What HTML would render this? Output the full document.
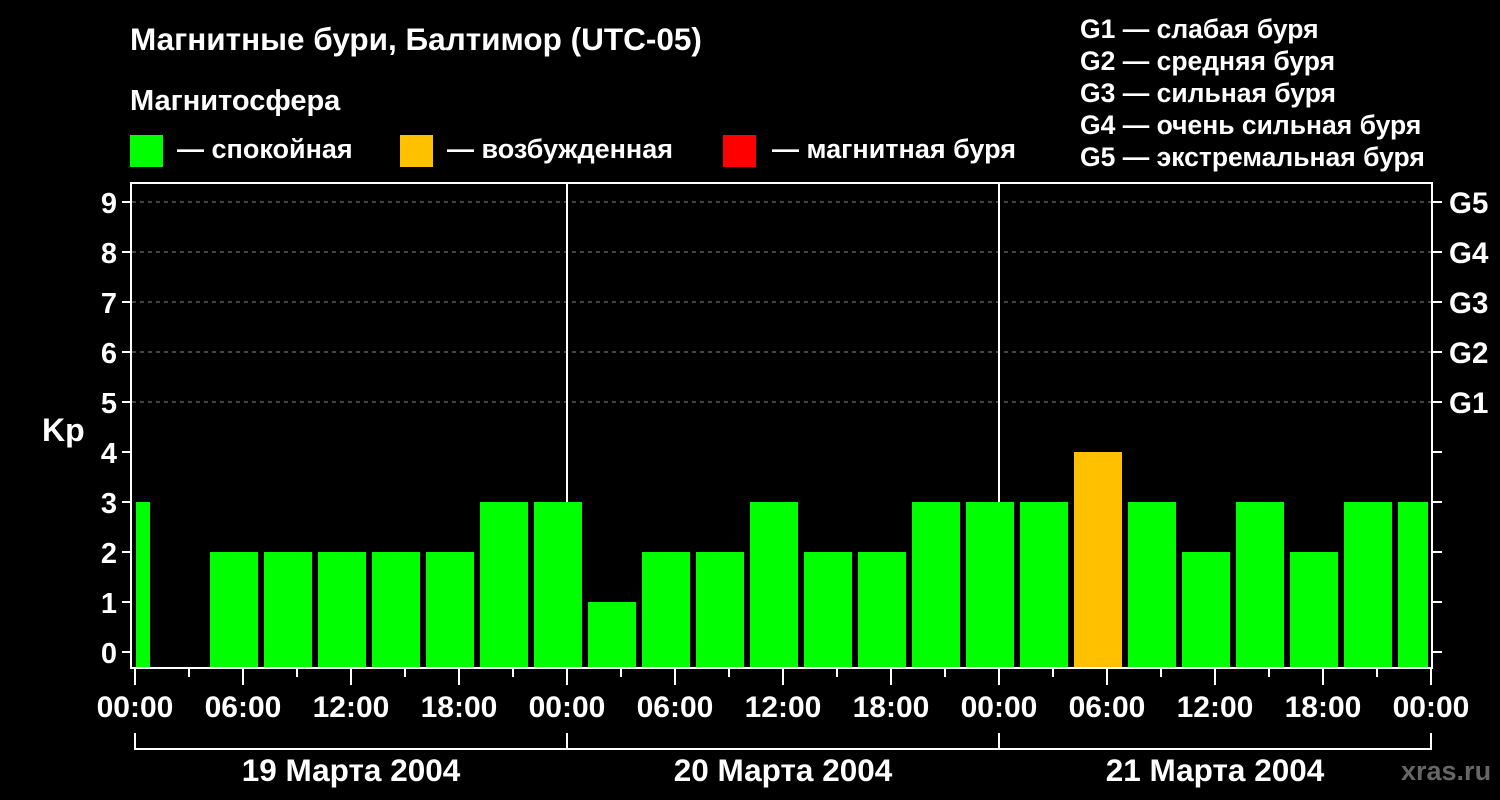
<!DOCTYPE html>
<html><head><meta charset="utf-8"><style>
html,body{margin:0;padding:0;background:#000;}
svg{display:block;font-family:"Liberation Sans",sans-serif;font-weight:bold;}
</style></head><body>
<svg width="1500" height="800" viewBox="0 0 1500 800" xmlns="http://www.w3.org/2000/svg">
<rect width="1500" height="800" fill="#000"/>
<g fill="#fff">
<text x="130" y="50" font-size="31.5">Магнитные бури, Балтимор (UTC-05)</text>
<text x="130" y="110" font-size="29">Магнитосфера</text>
<text x="177" y="158" font-size="27">— спокойная</text>
<text x="447" y="158" font-size="27">— возбужденная</text>
<text x="772" y="158" font-size="27">— магнитная буря</text>
<g font-size="26.5">
<text x="1080" y="38">G1 — слабая буря</text>
<text x="1080" y="70">G2 — средняя буря</text>
<text x="1080" y="102">G3 — сильная буря</text>
<text x="1080" y="134">G4 — очень сильная буря</text>
<text x="1080" y="166">G5 — экстремальная буря</text>
</g>
</g>
<rect x="130" y="135" width="33" height="32" fill="#00ff00"/>
<rect x="400" y="135" width="33" height="32" fill="#ffc000"/>
<rect x="723" y="135" width="33" height="32" fill="#ff0000"/>
<g stroke="#888" stroke-width="1" stroke-dasharray="4,4">
<line x1="132" y1="202" x2="1432" y2="202"/>
<line x1="132" y1="252" x2="1432" y2="252"/>
<line x1="132" y1="302" x2="1432" y2="302"/>
<line x1="132" y1="352" x2="1432" y2="352"/>
<line x1="132" y1="402" x2="1432" y2="402"/>
</g>
<line x1="567" y1="183" x2="567" y2="668" stroke="#fff" stroke-width="2"/>
<line x1="999" y1="183" x2="999" y2="668" stroke="#fff" stroke-width="2"/>
<g fill="#00ff00">
<rect x="136" y="502" width="14" height="166"/>
<rect x="210" y="552" width="48" height="116"/>
<rect x="264" y="552" width="48" height="116"/>
<rect x="318" y="552" width="48" height="116"/>
<rect x="372" y="552" width="48" height="116"/>
<rect x="426" y="552" width="48" height="116"/>
<rect x="480" y="502" width="48" height="166"/>
<rect x="534" y="502" width="48" height="166"/>
<rect x="588" y="602" width="48" height="66"/>
<rect x="642" y="552" width="48" height="116"/>
<rect x="696" y="552" width="48" height="116"/>
<rect x="750" y="502" width="48" height="166"/>
<rect x="804" y="552" width="48" height="116"/>
<rect x="858" y="552" width="48" height="116"/>
<rect x="912" y="502" width="48" height="166"/>
<rect x="966" y="502" width="48" height="166"/>
<rect x="1020" y="502" width="48" height="166"/>
<rect x="1128" y="502" width="48" height="166"/>
<rect x="1182" y="552" width="48" height="116"/>
<rect x="1236" y="502" width="48" height="166"/>
<rect x="1290" y="552" width="48" height="116"/>
<rect x="1344" y="502" width="48" height="166"/>
<rect x="1398" y="502" width="30" height="166"/>
</g>
<rect x="1074" y="452" width="48" height="216" fill="#ffc000"/>
<rect x="131" y="183" width="1301" height="485" fill="none" stroke="#fff" stroke-width="2"/>
<g stroke="#fff" stroke-width="2">
<path d="M122 652H131M122 602H131M122 552H131M122 502H131M122 452H131M122 402H131M122 352H131M122 302H131M122 252H131M122 202H131"/>
<path d="M1432 652H1442M1432 602H1442M1432 552H1442M1432 502H1442M1432 452H1442M1432 402H1442M1432 352H1442M1432 302H1442M1432 252H1442M1432 202H1442"/>
<path d="M135 668V685M243 668V685M351 668V685M459 668V685M567 668V685M675 668V685M783 668V685M891 668V685M999 668V685M1107 668V685M1215 668V685M1323 668V685M1431 668V685"/>
<path d="M189 668V677M297 668V677M405 668V677M513 668V677M621 668V677M729 668V677M837 668V677M945 668V677M1053 668V677M1161 668V677M1269 668V677M1377 668V677"/>
<path d="M135 733V749H1431V733M567 733V749M999 733V749" fill="none"/>
</g>
<g fill="#fff" font-size="29" text-anchor="end">
<text x="117" y="663">0</text><text x="117" y="613">1</text><text x="117" y="563">2</text><text x="117" y="513">3</text><text x="117" y="463">4</text>
<text x="117" y="413">5</text><text x="117" y="363">6</text><text x="117" y="313">7</text><text x="117" y="263">8</text><text x="117" y="213">9</text>
</g>
<g fill="#fff" font-size="29.5">
<text x="1449" y="413">G1</text><text x="1449" y="363">G2</text><text x="1449" y="313">G3</text><text x="1449" y="263">G4</text><text x="1449" y="213">G5</text>
<text x="42" y="441" font-size="32">Kp</text>
</g>
<g fill="#fff" font-size="30" text-anchor="middle">
<text x="135" y="717">00:00</text><text x="243" y="717">06:00</text><text x="351" y="717">12:00</text><text x="459" y="717">18:00</text>
<text x="567" y="717">00:00</text><text x="675" y="717">06:00</text><text x="783" y="717">12:00</text><text x="891" y="717">18:00</text>
<text x="999" y="717">00:00</text><text x="1107" y="717">06:00</text><text x="1215" y="717">12:00</text><text x="1323" y="717">18:00</text>
<text x="1431" y="717">00:00</text>
</g>
<g fill="#fff" font-size="31.5" text-anchor="middle">
<text x="351" y="781">19 Марта 2004</text><text x="783" y="781">20 Марта 2004</text><text x="1215" y="781">21 Марта 2004</text>
</g>
<text x="1401" y="780" fill="#666" font-size="27">xras.ru</text>
</svg>
</body></html>
